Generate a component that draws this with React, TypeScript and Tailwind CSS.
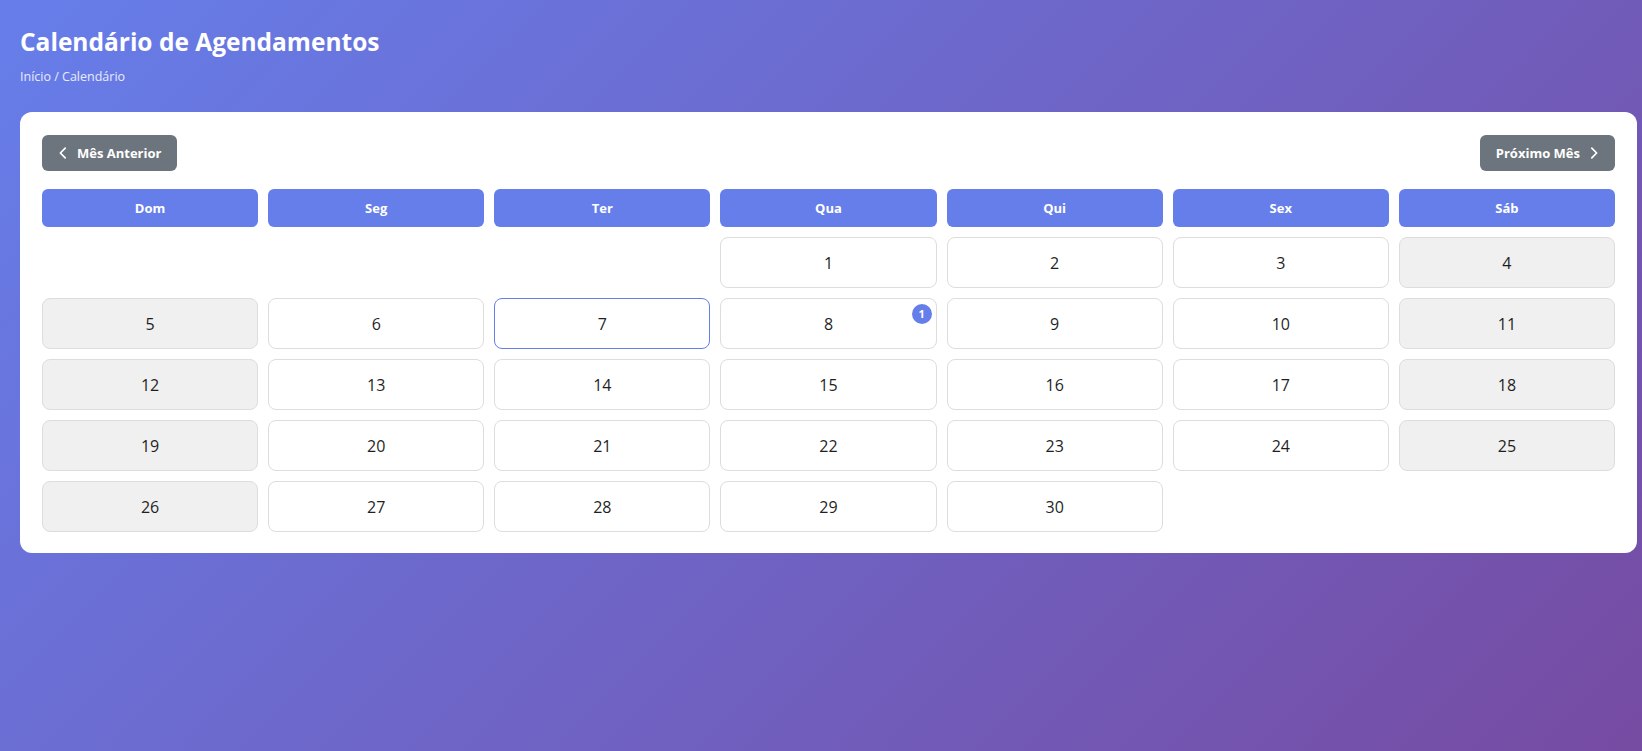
import React from 'react';

const weekDays = ['Dom', 'Seg', 'Ter', 'Qua', 'Qui', 'Sex', 'Sáb'];

// Novembro começa numa quarta-feira (3 células vazias), 30 dias
const leading = 3;
const totalDays = 30;
const today = 7;
const appointments: Record<number, number> = { 8: 1 };

const ChevronLeft = () => (
  <svg width="12" height="14" viewBox="0 0 12 16" fill="none" stroke="currentColor" strokeWidth="2" strokeLinecap="round" strokeLinejoin="round">
    <path d="M8.5 2.5 3 8l5.5 5.5" />
  </svg>
);

const ChevronRight = () => (
  <svg width="12" height="14" viewBox="0 0 12 16" fill="none" stroke="currentColor" strokeWidth="2" strokeLinecap="round" strokeLinejoin="round">
    <path d="M3.5 2.5 9 8l-5.5 5.5" />
  </svg>
);

const DayCell = ({ day, col }: { day: number; col: number }) => {
  const weekend = col === 0 || col === 6;
  const isToday = day === today;
  const count = appointments[day];
  return (
    <div
      className={`relative h-[51px] rounded-lg border flex items-center justify-center text-base font-medium text-[#1f1f1f] ${
        isToday ? 'border-[#667eea] bg-white' : weekend ? 'border-[#ddd] bg-[#f0f0f0]' : 'border-[#ddd] bg-white'
      }`}
    >
      {day}
      {count ? (
        <span className="absolute top-[5px] right-[4px] w-5 h-5 rounded-full bg-[#667eea] text-white text-[11px] font-bold flex items-center justify-center">
          {count}
        </span>
      ) : null}
    </div>
  );
};

export default function App() {
  const cells: (number | null)[] = [];
  for (let i = 0; i < leading; i++) cells.push(null);
  for (let d = 1; d <= totalDays; d++) cells.push(d);

  return (
    <div
      className="min-h-screen w-full bg-[linear-gradient(135deg,#667eea_0%,#764ba2_100%)] pl-5 pr-[5px] pt-[27px] pb-10"
      style={{ fontFamily: '"Open Sans", "Noto Sans", sans-serif' }}
    >
      {/* --- Cabeçalho --- */}
      <header className="mb-[26px]">
        <h1 className="text-[24.5px] font-bold text-white leading-tight">Calendário de Agendamentos</h1>
        <nav className="mt-[10px] text-[12.5px] text-white/85">Início / Calendário</nav>
      </header>

      {/* --- Calendário --- */}
      <section className="bg-white rounded-xl px-[22px] pt-[23px] pb-[21px]">
        <div className="flex items-center justify-between mb-[18px]">
          <button className="h-9 pl-[15px] pr-4 rounded-md bg-[#6c757d] text-white text-[13px] font-bold flex items-center gap-[8px]">
            <ChevronLeft />
            Mês Anterior
          </button>
          <button className="h-9 pl-4 pr-[15px] rounded-md bg-[#6c757d] text-white text-[13px] font-bold flex items-center gap-[8px]">
            Próximo Mês
            <ChevronRight />
          </button>
        </div>

        <div className="grid grid-cols-7 gap-[10px]">
          {weekDays.map((w) => (
            <div key={w} className="h-[38px] rounded-md bg-[#667eea] text-white text-[13px] font-bold flex items-center justify-center">
              {w}
            </div>
          ))}
          {cells.map((d, i) =>
            d === null ? <div key={`e${i}`} className="h-[51px]" /> : <DayCell key={d} day={d} col={i % 7} />
          )}
        </div>
      </section>
    </div>
  );
}
